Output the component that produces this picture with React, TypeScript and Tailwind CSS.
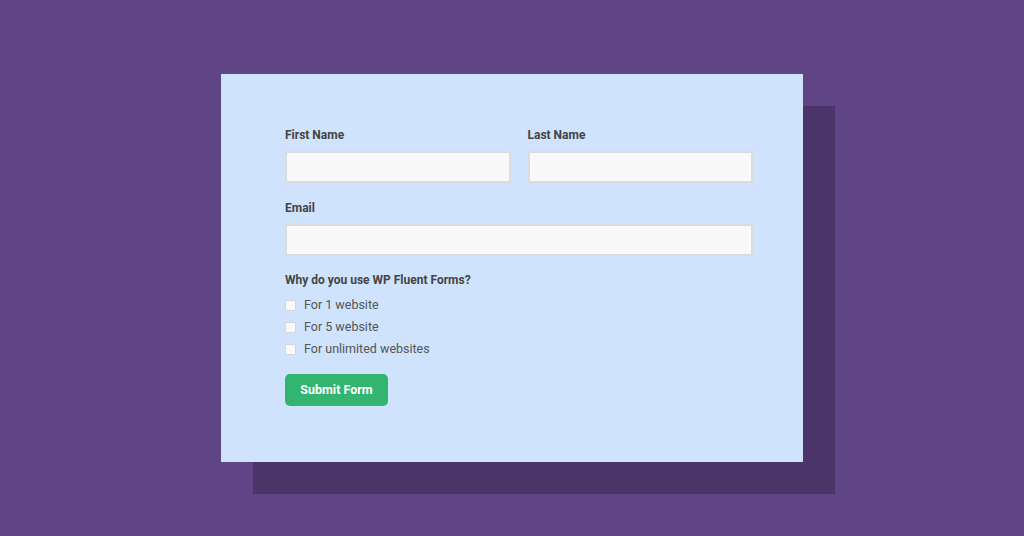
import React from "react";

const options = ["For 1 website", "For 5 website", "For unlimited websites"];

function Field({ label, className = "" }: { label: string; className?: string }) {
  return (
    <div className={`flex flex-col ${className}`}>
      <label className="text-[12px] leading-[16px] font-bold text-[#444]">{label}</label>
      <input
        type="text"
        className="mt-[8px] h-[32px] w-full border-2 border-[#dcdcdc] bg-[#f9f9f9] outline-none"
      />
    </div>
  );
}

export default function App() {
  return (
    <div
      className="w-[1024px] h-[536px] bg-[#5f4586] pt-[74px] pl-[221px]"
      style={{ fontFamily: "Roboto, 'Liberation Sans', sans-serif" }}
    >
      <div className="w-[582px] h-[388px] bg-[#cfe3fd] shadow-[32px_32px_0_0_#4a3468] pt-[53px] pl-[64px]">
        <div className="w-[468px]">
          <div className="grid grid-cols-2 gap-x-[17px]">
            <Field label="First Name" />
            <Field label="Last Name" />
          </div>
          <Field label="Email" className="mt-[17px]" />

          <p className="mt-[16px] text-[12px] leading-[16px] font-bold text-[#444]">
            Why do you use WP Fluent Forms?
          </p>
          <div className="mt-[6px] flex flex-col">
            {options.map((opt) => (
              <label key={opt} className="flex items-center h-[22px] text-[12.5px] text-[#555]">
                <span className="w-[11px] h-[11px] border border-[#d6d6d6] bg-[#f9f9f9] rounded-[1px] mr-[8px]" />
                {opt}
              </label>
            ))}
          </div>

          <button className="mt-[14px] w-[103px] h-[32px] rounded-[5px] bg-[#31b570] text-white text-[12.5px] font-bold">
            Submit Form
          </button>
        </div>
      </div>
    </div>
  );
}
